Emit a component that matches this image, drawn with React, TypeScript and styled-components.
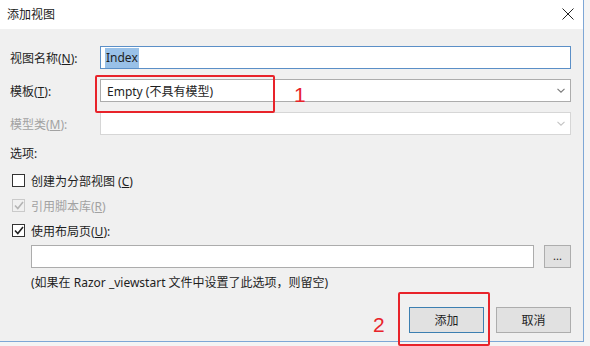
import React from "react";
import styled, { createGlobalStyle } from "styled-components";

const GlobalStyle = createGlobalStyle`
  html, body {
    margin: 0;
    padding: 0;
    background: #f4f4f4;
  }
  body {
    font-family: "Segoe UI", "Noto Sans", "Noto Sans CJK SC", sans-serif;
    font-size: 12px;
    color: #1e1e1e;
  }
`;

const Page = styled.div`
  width: 590px;
  height: 346px;
  position: relative;
  overflow: hidden;
  background: #f4f4f4;
`;

const Window = styled.div`
  width: 583px;
  height: 341px;
  display: flex;
  flex-direction: column;
  background: #f0f0f0;
  border-right: 1px solid #7ea7d6;
  border-bottom: 1px solid #7ea7d6;
`;

const TitleBar = styled.div`
  height: 29px;
  flex: none;
  display: flex;
  align-items: center;
  justify-content: space-between;
  padding: 0 9px 0 7px;
  background: #ffffff;
`;

const Title = styled.span`
  font-size: 12px;
  color: #1a1a1a;
  margin-top: -2px;
`;

const CloseIcon = styled.svg`
  width: 12px;
  height: 12px;
  margin-top: -2px;
`;

const Body = styled.div`
  flex: 1;
  display: flex;
  flex-direction: column;
  padding: 17px 12px 0 10px;
`;

const FieldRow = styled.div`
  display: grid;
  grid-template-columns: 90px 1fr;
  align-items: center;
  height: 23px;
  & + & {
    margin-top: 10px;
  }
`;

const Label = styled.span<{ disabled?: boolean }>`
  color: ${(p) => (p.disabled ? "#a2a2a2" : "#1e1e1e")};
  font-size: 12px;
  white-space: nowrap;
`;

const Key = styled.span`
  text-decoration: underline;
  text-underline-offset: 1px;
`;

const TextBox = styled.div<{ focused?: boolean }>`
  height: 23px;
  box-sizing: border-box;
  background: #ffffff;
  border: 1px solid ${(p) => (p.focused ? "#5b8fc7" : "#acacac")};
  display: flex;
  align-items: center;
  padding: 0 4px;
  flex: 1;
`;

const Selected = styled.span`
  background: #99c1e8;
  padding: 1px 1px 2px;
`;

const Select = styled.div<{ disabled?: boolean }>`
  height: 23px;
  box-sizing: border-box;
  background: #ffffff;
  border: 1px solid ${(p) => (p.disabled ? "#d6d6d6" : "#acacac")};
  display: flex;
  align-items: center;
  justify-content: space-between;
  padding: 0 5px 0 6px;
  color: #1e1e1e;
`;

const Chevron = styled.svg<{ disabled?: boolean }>`
  width: 8px;
  height: 5px;
  stroke: ${(p) => (p.disabled ? "#c4c4c4" : "#7a7a7a")};
`;

const SectionTitle = styled.div`
  margin-top: 11px;
  height: 16px;
  line-height: 16px;
`;

const CheckRow = styled.div<{ disabled?: boolean }>`
  height: 25px;
  display: flex;
  align-items: center;
  gap: 6px;
  padding-left: 2px;
  color: ${(p) => (p.disabled ? "#a2a2a2" : "#1e1e1e")};
  &:first-of-type {
    margin-top: 6px;
  }
`;

const Box = styled.span<{ disabled?: boolean }>`
  width: 13px;
  height: 13px;
  box-sizing: border-box;
  border: 1px solid ${(p) => (p.disabled ? "#cacaca" : "#333333")};
  background: ${(p) => (p.disabled ? "#f0f0f0" : "#ffffff")};
  display: flex;
  align-items: center;
  justify-content: center;
`;

const CheckList = styled.div`
  display: flex;
  flex-direction: column;
`;

const LayoutRow = styled.div`
  display: flex;
  gap: 10px;
  margin-top: 2px;
  padding-left: 21px;
`;

const BrowseButton = styled.div`
  width: 27px;
  height: 23px;
  box-sizing: border-box;
  border: 1px solid #adadad;
  background: #e1e1e1;
  display: flex;
  align-items: center;
  justify-content: center;
  font-size: 11px;
  padding-bottom: 3px;
  flex: none;
`;

const Hint = styled.div`
  margin-top: 7px;
  padding-left: 21px;
  height: 16px;
  line-height: 16px;
`;

const Footer = styled.div`
  display: flex;
  justify-content: flex-end;
  gap: 12px;
  margin-top: 16px;
`;

const Button = styled.div<{ primary?: boolean }>`
  width: 75px;
  height: 26px;
  box-sizing: border-box;
  border: 1px solid ${(p) => (p.primary ? "#3c7fb1" : "#adadad")};
  background: #e1e1e1;
  display: flex;
  align-items: center;
  justify-content: center;
`;

const Marker = styled.div<{ x: number; y: number; w: number; h: number }>`
  position: absolute;
  left: ${(p) => p.x}px;
  top: ${(p) => p.y}px;
  width: ${(p) => p.w}px;
  height: ${(p) => p.h}px;
  box-sizing: border-box;
  border: 2px solid #e8232a;
  border-radius: 2px;
`;

const Number = styled.span<{ x: number; y: number }>`
  position: absolute;
  left: ${(p) => p.x}px;
  top: ${(p) => p.y}px;
  font-family: "Liberation Sans", Arial, sans-serif;
  font-size: 21px;
  line-height: 1;
  color: #e8232a;
`;

function Check() {
  return (
    <svg width="10" height="9" viewBox="0 0 10 9">
      <path d="M1 4.5 L3.8 7.5 L9 1" fill="none" stroke="currentColor" strokeWidth="1.6" />
    </svg>
  );
}

function DownArrow({ disabled }: { disabled?: boolean }) {
  return (
    <Chevron disabled={disabled} viewBox="0 0 8 5" fill="none" strokeWidth="1.1">
      <path d="M0.5 0.8 L4 4.2 L7.5 0.8" />
    </Chevron>
  );
}

export default function App() {
  return (
    <Page>
      <GlobalStyle />
      <Window>
        <TitleBar>
          <Title>添加视图</Title>
          <CloseIcon viewBox="0 0 12 12" stroke="#222" strokeWidth="1">
            <path d="M0.5 0.5 L11.5 11.5 M11.5 0.5 L0.5 11.5" />
          </CloseIcon>
        </TitleBar>
        <Body>
          <FieldRow>
            <Label>
              视图名称(<Key>N</Key>):
            </Label>
            <TextBox focused>
              <Selected>Index</Selected>
            </TextBox>
          </FieldRow>
          <FieldRow>
            <Label>
              模板(<Key>T</Key>):
            </Label>
            <Select>
              <span>Empty (不具有模型)</span>
              <DownArrow />
            </Select>
          </FieldRow>
          <FieldRow>
            <Label disabled>
              模型类(<Key>M</Key>):
            </Label>
            <Select disabled>
              <span />
              <DownArrow disabled />
            </Select>
          </FieldRow>

          <SectionTitle>选项:</SectionTitle>
          <CheckList>
            <CheckRow>
              <Box />
              <span>
                创建为分部视图 (<Key>C</Key>)
              </span>
            </CheckRow>
            <CheckRow disabled>
              <Box disabled style={{ color: "#b4b4b4" }}>
                <Check />
              </Box>
              <span>
                引用脚本库(<Key>R</Key>)
              </span>
            </CheckRow>
            <CheckRow>
              <Box style={{ color: "#222" }}>
                <Check />
              </Box>
              <span>
                使用布局页(<Key>U</Key>):
              </span>
            </CheckRow>
          </CheckList>

          <LayoutRow>
            <TextBox />
            <BrowseButton>...</BrowseButton>
          </LayoutRow>
          <Hint>(如果在 Razor _viewstart 文件中设置了此选项，则留空)</Hint>

          <Footer>
            <Button primary>添加</Button>
            <Button>取消</Button>
          </Footer>
        </Body>
      </Window>

      <Marker x={95} y={75} w={180} h={38} />
      <Number x={294} y={84}>1</Number>
      <Marker x={398} y={292} w={92} h={54} />
      <Number x={373} y={314}>2</Number>
    </Page>
  );
}
